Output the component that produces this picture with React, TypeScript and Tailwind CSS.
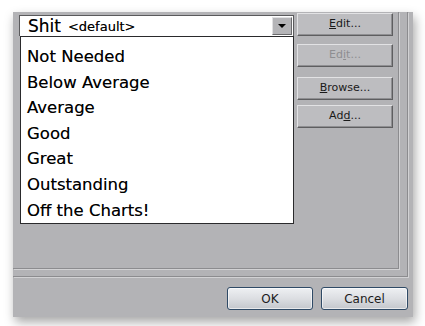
import React from "react";

const items = ["Not Needed", "Below Average", "Average", "Good", "Great", "Outstanding", "Off the Charts!"];

const ClassicButton = ({ children, disabled, className }: { children: React.ReactNode; disabled?: boolean; className?: string }) => (
    <div
        className={`w-[96px] h-[23px] bg-[#bdbdc0] border border-t-[#e2e2e4] border-l-[#e2e2e4] border-r-[#5e5e60] border-b-[#5e5e60] shadow-[inset_-1px_-1px_0_#8f8f92] flex items-center justify-center text-[11px] font-['DejaVu_Sans',sans-serif] ${
            disabled ? "text-[#8e8e91]" : "text-[#1a1a1a]"
        } ${className ?? ""}`}
    >
        {children}
    </div>
);

const VistaButton = ({ label, w }: { label: string; w: string }) => (
    <div
        className={`${w} h-[23px] rounded-[3px] border border-[#2f4a66] bg-gradient-to-b from-[#eef0f3] via-[#dcdee2] to-[#c4c7cc] shadow-[inset_0_0_0_1px_rgba(255,255,255,0.6)] flex items-center justify-center text-[12px] text-[#1c1c1c] font-['DejaVu_Sans',sans-serif]`}
    >
        {label}
    </div>
);

export default function App() {
    return (
        <div className="w-[425px] h-[326px] bg-white overflow-hidden pt-[12px] pl-[13px]">
            <div className="w-[400px] h-[305px] bg-[#b3b3b6] shadow-[2px_5px_10px_rgba(0,0,0,0.35)] flex flex-col">
                {/* etched frame, outer line */}
                <div className="w-[395px] h-[265px] border-r border-b border-[#8c8c8f] shadow-[1px_1px_0_#d2d2d4]">
                    {/* inner line */}
                    <div className="w-[386px] h-[257px] border-r border-b border-[#8c8c8f] shadow-[1px_1px_0_#d2d2d4] flex pl-[6px]">
                        <div className="w-[275px] pt-[3px] flex flex-col">
                            {/* combo */}
                            <div className="h-[21px] bg-white border border-[#5a5a5c] border-b-0 flex items-center pl-[8px] pr-[1px] font-['DejaVu_Sans',sans-serif] text-black [text-shadow:0_0_0.2px_rgba(0,0,0,0.5)]">
                                <span className="text-[17px] leading-none">Shit</span>
                                <span className="text-[13px] leading-none ml-[7px] mt-[1px]">&lt;default&gt;</span>
                                <div className="ml-auto w-[20px] h-[18px] bg-[#b4b4b7] border border-t-[#e0e0e2] border-l-[#e0e0e2] border-r-[#6a6a6c] border-b-[#6a6a6c] flex items-center justify-center [text-shadow:none]">
                                    <div className="w-0 h-0 border-l-[4px] border-r-[4px] border-t-[4px] border-l-transparent border-r-transparent border-t-black" />
                                </div>
                            </div>
                            {/* dropdown list */}
                            <div className="ml-[1px] bg-white border border-[#2a2a2c] pt-[7px] pl-[6px] font-['DejaVu_Sans',sans-serif] text-[16.5px] leading-[25.6px] text-black [text-shadow:0_0_0.2px_rgba(0,0,0,0.5)]">
                                {items.map((t) => (
                                    <div key={t}>{t}</div>
                                ))}
                            </div>
                        </div>
                        <div className="ml-[3px] pt-[1px] flex flex-col">
                            <ClassicButton>
                                <span><u>E</u>dit...</span>
                            </ClassicButton>
                            <ClassicButton disabled className="mt-[8px]">
                                <span>Ed<u>i</u>t...</span>
                            </ClassicButton>
                            <ClassicButton className="mt-[10px]">
                                <span><u>B</u>rowse...</span>
                            </ClassicButton>
                            <ClassicButton className="mt-[5px]">
                                <span>Ad<u>d</u>...</span>
                            </ClassicButton>
                        </div>
                    </div>
                </div>
                <div className="flex justify-end gap-[8px] pr-[5px] mt-[10px]">
                    <VistaButton label="OK" w="w-[86px]" />
                    <VistaButton label="Cancel" w="w-[87px]" />
                </div>
            </div>
        </div>
    );
}
